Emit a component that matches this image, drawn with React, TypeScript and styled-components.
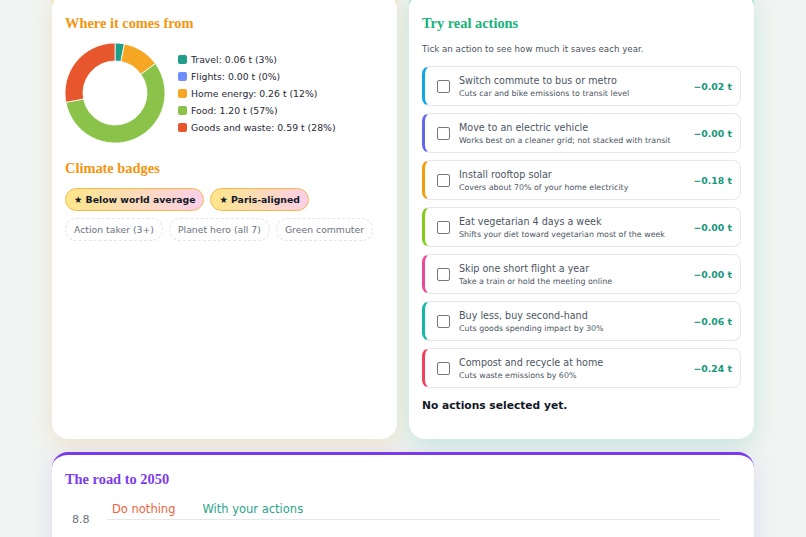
import React from "react";
import styled, { createGlobalStyle } from "styled-components";

const GlobalStyle = createGlobalStyle`
  html, body {
    margin: 0;
    padding: 0;
    background: #f1f4f2;
    font-family: "DejaVu Sans", Verdana, sans-serif;
    color: #1f2937;
    overflow: hidden;
  }
`;

const Page = styled.div`
  width: 702px;
  margin: -10px auto 0;
  display: flex;
  flex-direction: column;
  gap: 13px;
`;

const Grid = styled.div`
  display: grid;
  grid-template-columns: 1fr 1fr;
  gap: 12px;
`;

const Card = styled.section<{ $accent: string; $glow: string }>`
  background: #fff;
  border-radius: 16px;
  border-top: 3px solid ${({ $accent }) => $accent};
  padding: 20px 13px 14px;
  height: 449px;
  box-sizing: border-box;
  box-shadow: 0 6px 22px ${({ $glow }) => $glow};
`;

const WideCard = styled(Card)`
  height: 200px;
  padding-top: 14px;
`;

const Heading = styled.h2<{ $color: string }>`
  margin: 0;
  font-family: "Liberation Serif", "Times New Roman", serif;
  font-weight: 700;
  font-size: 14.4px;
  line-height: 20px;
  color: ${({ $color }) => $color};
`;

const SubHeading = styled(Heading)`
  margin-top: 15px;
`;

const DonutRow = styled.div`
  display: flex;
  align-items: center;
  gap: 13px;
  margin-top: 10px;
`;

const Legend = styled.ul`
  list-style: none;
  margin: 0;
  padding: 0;
  display: flex;
  flex-direction: column;
  gap: 4px;
`;

const LegendItem = styled.li`
  display: flex;
  align-items: center;
  gap: 4px;
  font-size: 9.3px;
  line-height: 13px;
  color: #1f2937;
`;

const Swatch = styled.span<{ $color: string }>`
  width: 9px;
  height: 9px;
  border-radius: 2px;
  background: ${({ $color }) => $color};
`;

const BadgeWrap = styled.div`
  margin-top: 10px;
  display: flex;
  flex-direction: column;
  gap: 7px;
`;

const BadgeRow = styled.div`
  display: flex;
  gap: 6px;
`;

const Badge = styled.span<{ $earned?: boolean }>`
  display: inline-flex;
  align-items: center;
  height: 23px;
  box-sizing: border-box;
  padding: 0 8px;
  border-radius: 999px;
  font-size: 9.3px;
  ${({ $earned }) =>
    $earned
      ? `
    font-weight: 700;
    color: #111827;
    background: linear-gradient(90deg, #fde68a, #fbcfe8);
    border: 1px solid #f6b74a;
  `
      : `
    color: #6b7280;
    background: #fff;
    border: 1px dashed #e3e6ea;
  `}
`;

const Intro = styled.p`
  margin: 10px 0 0;
  font-size: 8.7px;
  line-height: 12px;
  color: #4b5563;
`;

const ActionList = styled.div`
  margin-top: 11px;
  display: flex;
  flex-direction: column;
  gap: 7px;
`;

const ActionRow = styled.label<{ $color: string }>`
  height: 40px;
  box-sizing: border-box;
  display: flex;
  align-items: center;
  gap: 9px;
  padding: 0 8px 0 12px;
  border: 1px solid #e5e7eb;
  border-left: 3px solid ${({ $color }) => $color};
  border-radius: 8px;
  background: #fff;
`;

const Check = styled.span`
  width: 13px;
  height: 13px;
  box-sizing: border-box;
  border: 1px solid #767676;
  border-radius: 2px;
  flex-shrink: 0;
`;

const ActionText = styled.div`
  flex: 1;
  display: flex;
  flex-direction: column;
`;

const ActionTitle = styled.span`
  font-size: 9.6px;
  line-height: 14px;
  color: #4b5563;
`;

const ActionDesc = styled.span`
  font-size: 7.9px;
  line-height: 11px;
  color: #4b5563;
`;

const Amount = styled.span`
  font-size: 9.3px;
  font-weight: 700;
  color: #17987c;
`;

const Summary = styled.p`
  margin: 11px 0 0;
  font-size: 10.7px;
  line-height: 14px;
  font-weight: 700;
  color: #111827;
`;

const ChartLegend = styled.div`
  display: flex;
  gap: 27px;
  margin: 13px 0 0 47px;
  font-size: 11.5px;
  line-height: 14px;
`;

const LegendLabel = styled.span<{ $color: string }>`
  color: ${({ $color }) => $color};
`;

const Chart = styled.svg`
  display: block;
  margin-top: -8px;
`;

const slices = [
  { label: "Travel", value: "0.06 t (3%)", pct: 3, color: "#1f9e89" },
  { label: "Flights", value: "0.00 t (0%)", pct: 0, color: "#6f8cff" },
  { label: "Home energy", value: "0.26 t (12%)", pct: 12, color: "#f5a623" },
  { label: "Food", value: "1.20 t (57%)", pct: 57, color: "#8bc34a" },
  { label: "Goods and waste", value: "0.59 t (28%)", pct: 28, color: "#e8562e" },
];

const actions = [
  { title: "Switch commute to bus or metro", desc: "Cuts car and bike emissions to transit level", amt: "0.02", color: "#0ea5e9" },
  { title: "Move to an electric vehicle", desc: "Works best on a cleaner grid; not stacked with transit", amt: "0.00", color: "#6366f1" },
  { title: "Install rooftop solar", desc: "Covers about 70% of your home electricity", amt: "0.18", color: "#f59e0b" },
  { title: "Eat vegetarian 4 days a week", desc: "Shifts your diet toward vegetarian most of the week", amt: "0.00", color: "#84cc16" },
  { title: "Skip one short flight a year", desc: "Take a train or hold the meeting online", amt: "0.00", color: "#ec4899" },
  { title: "Buy less, buy second-hand", desc: "Cuts goods spending impact by 30%", amt: "0.06", color: "#14b8a6" },
  { title: "Compost and recycle at home", desc: "Cuts waste emissions by 60%", amt: "0.24", color: "#f43f5e" },
];

// annular sector, angles in degrees clockwise from 12 o'clock
function sector(a0: number, a1: number, R = 50, r = 32, c = 50) {
  const pt = (a: number, rad: number) => {
    const t = ((a - 90) * Math.PI) / 180;
    return `${c + rad * Math.cos(t)} ${c + rad * Math.sin(t)}`;
  };
  const large = a1 - a0 > 180 ? 1 : 0;
  return `M ${pt(a0, R)} A ${R} ${R} 0 ${large} 1 ${pt(a1, R)} L ${pt(a1, r)} A ${r} ${r} 0 ${large} 0 ${pt(a0, r)} Z`;
}

const Donut = () => {
  let start = 0;
  return (
    <svg width="100" height="100" viewBox="0 0 100 100">
      {slices.map((s) => {
        const a0 = start;
        const a1 = start + (s.pct / 100) * 360;
        start = a1;
        if (s.pct === 0) return null;
        return <path key={s.label} d={sector(a0, a1)} fill={s.color} stroke="#fff" strokeWidth="0.8" />;
      })}
    </svg>
  );
};

export default function App() {
  return (
    <>
      <GlobalStyle />
      <Page>
        <Grid>
          <Card $accent="#f59e0b" $glow="rgba(232, 190, 120, 0.3)">
            <Heading $color="#f5950f">Where it comes from</Heading>
            <DonutRow>
              <Donut />
              <Legend>
                {slices.map((s) => (
                  <LegendItem key={s.label}>
                    <Swatch $color={s.color} />
                    {s.label}: {s.value}
                  </LegendItem>
                ))}
              </Legend>
            </DonutRow>
            <SubHeading $color="#f5950f">Climate badges</SubHeading>
            <BadgeWrap>
              <BadgeRow>
                <Badge $earned>★ Below world average</Badge>
                <Badge $earned>★ Paris-aligned</Badge>
              </BadgeRow>
              <BadgeRow>
                <Badge>Action taker (3+)</Badge>
                <Badge>Planet hero (all 7)</Badge>
                <Badge>Green commuter</Badge>
              </BadgeRow>
            </BadgeWrap>
          </Card>
          <Card $accent="#10b981" $glow="rgba(110, 200, 170, 0.32)">
            <Heading $color="#17b37c">Try real actions</Heading>
            <Intro>Tick an action to see how much it saves each year.</Intro>
            <ActionList>
              {actions.map((a) => (
                <ActionRow key={a.title} $color={a.color}>
                  <Check />
                  <ActionText>
                    <ActionTitle>{a.title}</ActionTitle>
                    <ActionDesc>{a.desc}</ActionDesc>
                  </ActionText>
                  <Amount>−{a.amt} t</Amount>
                </ActionRow>
              ))}
            </ActionList>
            <Summary>No actions selected yet.</Summary>
          </Card>
        </Grid>
        <WideCard $accent="#7c3aed" $glow="rgba(160, 140, 230, 0.25)">
          <Heading $color="#7c3aed">The road to 2050</Heading>
          <ChartLegend>
            <LegendLabel $color="#f0643c">Do nothing</LegendLabel>
            <LegendLabel $color="#2aa58a">With your actions</LegendLabel>
          </ChartLegend>
          <Chart width="676" height="60" viewBox="0 0 676 60">
            <text x="7" y="15" fontSize="11" fill="#6b7280" fontFamily="DejaVu Sans, sans-serif">8.8</text>
            <line x1="42" y1="11.5" x2="655" y2="11.5" stroke="#e5e7eb" strokeWidth="1" />
          </Chart>
        </WideCard>
      </Page>
    </>
  );
}
